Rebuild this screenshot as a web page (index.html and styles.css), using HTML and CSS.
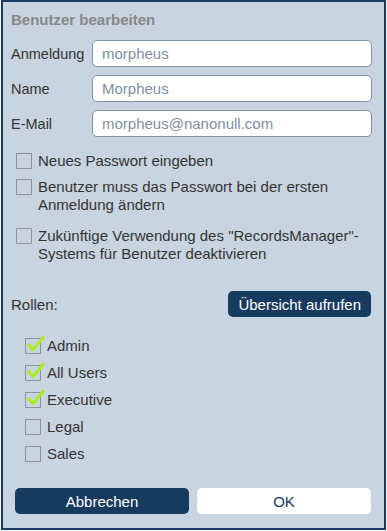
FILE: index.html
```html
<!DOCTYPE html>
<html lang="de">

<head>
    <meta charset="utf-8">
    <title>Benutzer bearbeiten</title>
    <link rel="stylesheet" href="styles.css">
</head>

<body>
    <div class="dialog">
        <h1 class="titel">Benutzer bearbeiten</h1>

        <div class="felder">
            <div class="feld">
                <span class="etikett">Anmeldung</span>
                <div class="eingabe">morpheus</div>
            </div>
            <div class="feld">
                <span class="etikett">Name</span>
                <div class="eingabe">Morpheus</div>
            </div>
            <div class="feld">
                <span class="etikett">E-Mail</span>
                <div class="eingabe">morpheus@nanonull.com</div>
            </div>
        </div>

        <div class="optionen">
            <div class="option">
                <span class="box"></span>
                <span>Neues Passwort eingeben</span>
            </div>
            <div class="option">
                <span class="box"></span>
                <span>Benutzer muss das Passwort bei der ersten Anmeldung ändern</span>
            </div>
            <div class="option weit">
                <span class="box"></span>
                <span>Zukünftige Verwendung des "RecordsManager"-Systems für Benutzer deaktivieren</span>
            </div>
        </div>

        <div class="rollen_kopf">
            <span>Rollen:</span>
            <button class="knopf">Übersicht aufrufen</button>
        </div>

        <div class="rollen">
            <div class="rolle">
                <span class="box">
                    <svg class="haken" width="20" height="18" viewBox="0 0 20 18"><path d="M2 9 L7 14.5 L18 1.5" /></svg>
                </span>
                <span>Admin</span>
            </div>
            <div class="rolle">
                <span class="box">
                    <svg class="haken" width="20" height="18" viewBox="0 0 20 18"><path d="M2 9 L7 14.5 L18 1.5" /></svg>
                </span>
                <span>All Users</span>
            </div>
            <div class="rolle">
                <span class="box">
                    <svg class="haken" width="20" height="18" viewBox="0 0 20 18"><path d="M2 9 L7 14.5 L18 1.5" /></svg>
                </span>
                <span>Executive</span>
            </div>
            <div class="rolle">
                <span class="box"></span>
                <span>Legal</span>
            </div>
            <div class="rolle">
                <span class="box"></span>
                <span>Sales</span>
            </div>
        </div>

        <div class="aktionen">
            <button class="knopf">Abbrechen</button>
            <button class="knopf hell">OK</button>
        </div>
    </div>
</body>

</html>
```

FILE: styles.css
```css
* {
    margin: 0;
    padding: 0;
    box-sizing: border-box;
}

body {
    background-color: #ffffff;
    font-family: "Liberation Sans", Arial, sans-serif;
    font-size: 15px;
    color: #333333;
}

.dialog {
    width: 385px;
    height: 530px;
    margin-left: 1px;
    border: 2px solid #1a3b63;
    background-color: #c8d5e0;
    padding: 9px 12px 0 8px;
}

.titel {
    font-size: 15px;
    line-height: 18px;
    color: #878787;
}

.felder {
    margin-top: 11px;
    display: flex;
    flex-direction: column;
    gap: 8px;
}

.feld {
    display: flex;
    align-items: center;
}

.etikett {
    width: 81px;
    font-size: 14.5px;
}

.eingabe {
    flex: 1;
    height: 27px;
    line-height: 25px;
    background-color: #ffffff;
    border: 1px solid #8393a1;
    border-radius: 5px;
    padding-left: 9px;
    color: #7f90a1;
}

.optionen {
    margin-top: 15px;
    padding-left: 5px;
    display: flex;
    flex-direction: column;
    gap: 8px;
}

.option {
    display: flex;
    align-items: flex-start;
    line-height: 18px;
}

.option.weit {
    margin-top: 5px;
}

.box {
    position: relative;
    flex: none;
    width: 16px;
    height: 16px;
    border: 1px solid #89949d;
    margin-right: 6px;
}

.option .box {
    margin-top: 1px;
}

.haken {
    position: absolute;
    left: 0;
    top: -4px;
    fill: none;
    stroke: #a6ef17;
    stroke-width: 3;
}

.rollen_kopf {
    margin-top: 28px;
    display: flex;
    justify-content: space-between;
    align-items: center;
}

.knopf {
    font-family: "Liberation Sans", Arial, sans-serif;
    font-size: 15px;
    height: 26px;
    background-color: #173a5f;
    color: #ffffff;
    border: none;
    border-radius: 5px;
    padding: 0 10px;
}

.rollen_kopf .knopf {
    margin-right: 1px;
}

.rollen {
    margin-top: 15px;
    padding-left: 14px;
}

.rolle {
    display: flex;
    align-items: center;
    height: 27px;
}

.aktionen {
    margin-top: 21px;
    padding-left: 4px;
    display: flex;
    gap: 8px;
}

.aktionen .knopf {
    flex: 1;
}

.knopf.hell {
    background-color: #ffffff;
    color: #173a5f;
    margin-right: 1px;
}
```
